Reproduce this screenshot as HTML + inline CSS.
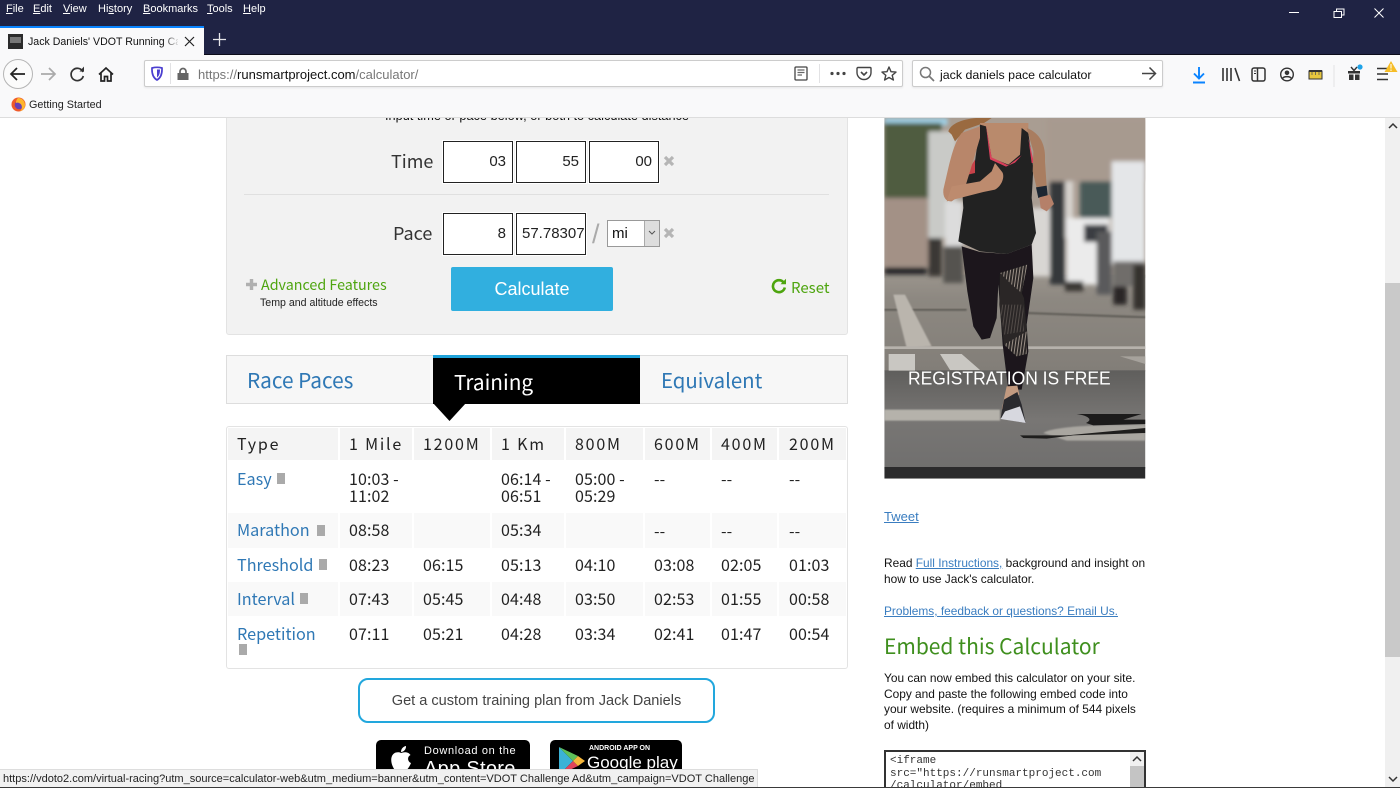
<!DOCTYPE html>
<html><head><meta charset="utf-8"><title>Jack Daniels' VDOT Running Calculator</title>
<style>
html,body{margin:0;padding:0;background:#fff;width:1400px;height:788px;overflow:hidden}
#r{position:relative;width:1400px;height:788px;overflow:hidden;font-family:"Liberation Sans",sans-serif}
#r div,#r svg{position:absolute}
.t{white-space:nowrap;line-height:20px;height:20px}
.o{font-family:"Noto Sans CJK JP","Liberation Sans",sans-serif}
.c{font-size:16px;letter-spacing:.1px;color:#222;font-family:"Noto Sans CJK JP","Liberation Sans",sans-serif}
.h{font-size:16px;color:#222;letter-spacing:1.8px;font-family:"Noto Sans CJK JP","Liberation Sans",sans-serif}
.l{font-size:16.2px;color:#2f78b5;font-family:"Noto Sans CJK JP","Liberation Sans",sans-serif}
.m{font-size:11px;color:#fff}
.b{background:#f4f4f4}
.z{background:#f9f9f9}
.i{background:#fff;border:1px solid #222;box-sizing:border-box;height:42px;font-size:15px;color:#222;text-align:right;line-height:40px;padding-right:6px;box-shadow:0 0 0 1px #fff;overflow:hidden}
.d{width:8px;height:11px;background:#aaa}
a{color:inherit}
.p{font-size:11.9px;color:#111;line-height:16px;white-space:nowrap}
</style></head><body><div id="r">

<!-- main left -->
<div style="left:226px;top:100px;width:622px;height:235px;background:#f2f2f2;border:1px solid #e3e3e3;box-sizing:border-box;border-radius:3px"></div>
<div class="t" style="left:226px;width:622px;text-align:center;top:106px;font-size:12.750px;color:#111">Input time or pace below, or both to calculate distance</div>

<div class="t o" style="left:391px;top:151px;font-size:18px;color:#333">Time</div>
<div class="i" style="left:443px;top:141px;width:70px">03</div>
<div class="i" style="left:516px;top:141px;width:70px">55</div>
<div class="i" style="left:589px;top:141px;width:70px">00</div>
<svg style="left:662px;top:154px" width="14" height="14" viewBox="0 0 14 14"><path d="M3 3L11 11M11 3L3 11" stroke="#b5b5b5" stroke-width="3.2"/></svg>
<div style="left:244px;top:194px;width:585px;height:1px;background:#e0e0e0"></div>
<div class="t o" style="left:393px;top:223px;font-size:18px;color:#333">Pace</div>
<div class="i" style="left:443px;top:213px;width:70px">8</div>
<div class="i" style="left:516px;top:213px;width:70px;text-align:left;padding:0 0 0 5px">57.78307</div>
<div class="t" style="left:592px;top:224px;font-size:27px;color:#aaa;font-weight:400">/</div>
<div style="left:607px;top:220px;width:53px;height:27px;background:#fff;border:1px solid #999;box-sizing:border-box"></div>
<div class="t" style="left:612px;top:224px;font-size:15px;color:#111">mi</div>
<div style="left:644px;top:221px;width:15px;height:25px;background:#ddd;border-left:1px solid #aaa;box-sizing:border-box"></div>
<svg style="left:646px;top:229px" width="12" height="8" viewBox="0 0 12 8"><path d="M3 2L6 5L9 2" stroke="#555" fill="none" stroke-width="1"/></svg>
<svg style="left:662px;top:226px" width="14" height="14" viewBox="0 0 14 14"><path d="M3 3L11 11M11 3L3 11" stroke="#b5b5b5" stroke-width="3.2"/></svg>

<svg style="left:245px;top:278px" width="13" height="13" viewBox="0 0 13 13"><path d="M1 6.500H12M6.500 1V12" stroke="#b0b0b0" stroke-width="3.4"/></svg>
<div class="t o" style="left:261px;top:275px;font-size:14.300px;color:#4ea50f">Advanced Features</div>
<div class="t" style="left:260px;top:293px;font-size:10.600px;color:#222">Temp and altitude effects</div>
<div style="left:451px;top:267px;width:162px;height:44px;background:#31afdf;border-radius:2px"></div>
<div class="t" style="left:451px;width:162px;text-align:center;top:279px;font-size:18px;color:#fff">Calculate</div>
<svg style="left:771px;top:278px" width="16" height="16" viewBox="0 0 16 16"><path d="M12.600 4.400A6 6 0 1 0 13.800 9.500" stroke="#4ea50f" stroke-width="2.6" fill="none"/><path d="M9.500 6.300H15V.8z" fill="#4ea50f"/></svg>
<div class="t o" style="left:791px;top:278px;font-size:15px;color:#4ea50f">Reset</div>

<!-- tabs -->
<div style="left:226px;top:355px;width:622px;height:49px;background:#f7f7f7;border:1px solid #ddd;box-sizing:border-box"></div>
<div style="left:433px;top:355px;width:207px;height:49px;background:#000"></div>
<div style="left:433px;top:355px;width:207px;height:3px;background:#1fa3da"></div>
<svg style="left:433px;top:403px" width="34" height="19" viewBox="0 0 34 19"><path d="M0 0H33L16.500 18z" fill="#000"/></svg>
<div class="t o" style="left:247px;top:369px;font-size:20.800px;color:#2f78b5">Race Paces</div>
<div class="t o" style="left:454px;top:371px;font-size:20.800px;color:#fff">Training</div>
<div class="t o" style="left:661px;top:369px;font-size:20.400px;color:#2f78b5">Equivalent</div>

<!-- table -->
<div style="left:226px;top:426px;width:622px;height:243px;border:1px solid #e3e3e3;border-radius:3px;box-sizing:border-box"></div>
<div class="b" style="left:228px;top:428px;width:110px;height:32px"></div>
<div class="b" style="left:340px;top:428px;width:72px;height:32px"></div>
<div class="b" style="left:414px;top:428px;width:76px;height:32px"></div>
<div class="b" style="left:492px;top:428px;width:72px;height:32px"></div>
<div class="b" style="left:566px;top:428px;width:77px;height:32px"></div>
<div class="b" style="left:645px;top:428px;width:65px;height:32px"></div>
<div class="b" style="left:712px;top:428px;width:65px;height:32px"></div>
<div class="b" style="left:779px;top:428px;width:67px;height:32px"></div>
<div class="z" style="left:228px;top:513px;width:110px;height:35px"></div>
<div class="z" style="left:340px;top:513px;width:72px;height:35px"></div>
<div class="z" style="left:414px;top:513px;width:76px;height:35px"></div>
<div class="z" style="left:492px;top:513px;width:72px;height:35px"></div>
<div class="z" style="left:566px;top:513px;width:77px;height:35px"></div>
<div class="z" style="left:645px;top:513px;width:65px;height:35px"></div>
<div class="z" style="left:712px;top:513px;width:65px;height:35px"></div>
<div class="z" style="left:779px;top:513px;width:67px;height:35px"></div>
<div class="z" style="left:228px;top:582px;width:110px;height:34px"></div>
<div class="z" style="left:340px;top:582px;width:72px;height:34px"></div>
<div class="z" style="left:414px;top:582px;width:76px;height:34px"></div>
<div class="z" style="left:492px;top:582px;width:72px;height:34px"></div>
<div class="z" style="left:566px;top:582px;width:77px;height:34px"></div>
<div class="z" style="left:645px;top:582px;width:65px;height:34px"></div>
<div class="z" style="left:712px;top:582px;width:65px;height:34px"></div>
<div class="z" style="left:779px;top:582px;width:67px;height:34px"></div>

<div class="t h" style="left:237px;top:433px">Type</div>
<div class="t h" style="left:349px;top:433px">1 Mile</div>
<div class="t h" style="left:423px;top:433px">1200M</div>
<div class="t h" style="left:501px;top:433px">1 Km</div>
<div class="t h" style="left:575px;top:433px">800M</div>
<div class="t h" style="left:654px;top:433px">600M</div>
<div class="t h" style="left:721px;top:433px">400M</div>
<div class="t h" style="left:789px;top:433px">200M</div>

<div class="t l" style="left:237px;top:468px">Easy</div><div class="d" style="left:277px;top:473px"></div>
<div class="t c" style="left:349px;top:468px">10:03 -</div><div class="t c" style="left:349px;top:485px">11:02</div>
<div class="t c" style="left:501px;top:468px">06:14 -</div><div class="t c" style="left:501px;top:485px">06:51</div>
<div class="t c" style="left:575px;top:468px">05:00 -</div><div class="t c" style="left:575px;top:485px">05:29</div>
<div class="t c" style="left:654px;top:468px">--</div><div class="t c" style="left:721px;top:468px">--</div><div class="t c" style="left:789px;top:468px">--</div>

<div class="t l" style="left:237px;top:519px">Marathon</div><div class="d" style="left:317px;top:525px"></div>
<div class="t c" style="left:349px;top:519px">08:58</div>
<div class="t c" style="left:501px;top:519px">05:34</div>
<div class="t c" style="left:654px;top:520px">--</div><div class="t c" style="left:721px;top:520px">--</div><div class="t c" style="left:789px;top:520px">--</div>

<div class="t l" style="left:237px;top:554px">Threshold</div><div class="d" style="left:319px;top:559px"></div>
<div class="t c" style="left:349px;top:554px">08:23</div><div class="t c" style="left:423px;top:554px">06:15</div><div class="t c" style="left:501px;top:554px">05:13</div><div class="t c" style="left:575px;top:554px">04:10</div><div class="t c" style="left:654px;top:554px">03:08</div><div class="t c" style="left:721px;top:554px">02:05</div><div class="t c" style="left:789px;top:554px">01:03</div>

<div class="t l" style="left:237px;top:588px">Interval</div><div class="d" style="left:300px;top:593px"></div>
<div class="t c" style="left:349px;top:588px">07:43</div><div class="t c" style="left:423px;top:588px">05:45</div><div class="t c" style="left:501px;top:588px">04:48</div><div class="t c" style="left:575px;top:588px">03:50</div><div class="t c" style="left:654px;top:588px">02:53</div><div class="t c" style="left:721px;top:588px">01:55</div><div class="t c" style="left:789px;top:588px">00:58</div>

<div class="t l" style="left:237px;top:623px">Repetition</div><div class="d" style="left:239px;top:644px"></div>
<div class="t c" style="left:349px;top:623px">07:11</div><div class="t c" style="left:423px;top:623px">05:21</div><div class="t c" style="left:501px;top:623px">04:28</div><div class="t c" style="left:575px;top:623px">03:34</div><div class="t c" style="left:654px;top:623px">02:41</div><div class="t c" style="left:721px;top:623px">01:47</div><div class="t c" style="left:789px;top:623px">00:54</div>

<!-- CTA -->
<div style="left:358px;top:678px;width:357px;height:45px;border:2px solid #22a7dd;border-radius:10px;box-sizing:border-box"></div>
<div class="t" style="left:358px;width:357px;text-align:center;top:691px;font-size:14.550px;color:#444">Get a custom training plan from Jack Daniels</div>

<!-- badges -->
<div style="left:376px;top:740px;width:154px;height:48px;background:#000;border-radius:5px"></div>
<svg style="left:388px;top:745px" width="26" height="30" viewBox="0 0 26 30"><path d="M13 8C11 7 8 7 6 8.500C2.500 11 2.500 17 5 22C7 26 9 27 11 26C12.500 25.300 13.500 25.300 15 26C17 27 19 25 21 22C22 20.500 22.500 19 23 18C20 17 18.500 12 22.500 10C20.500 7 16.500 6.700 13 8zM13 7C13 4 15 1.500 18 1C18.300 4 16 7 13 7z" fill="#fff"/></svg>
<div class="t" style="left:424px;top:741px;font-size:11px;color:#fff;letter-spacing:.65px">Download on the</div>
<div class="t" style="left:424px;top:759px;font-size:20px;color:#fff;letter-spacing:.3px">App Store</div>
<div style="left:550px;top:740px;width:132px;height:48px;background:#000;border-radius:5px"></div>
<svg style="left:558px;top:746px" width="28" height="30" viewBox="0 0 28 30"><path d="M1 1V29L15 15z" fill="#3bb2d6"/><path d="M1 1L15 15L20 10z" fill="#5fc05a"/><path d="M1 29L15 15L20 20z" fill="#e0435a"/><path d="M15 15L20 10L27 15L20 20z" fill="#f5b63a"/></svg>
<div class="t" style="left:589px;top:739px;font-size:7px;font-weight:700;color:#fff">ANDROID APP ON</div>
<div class="t" style="left:587px;top:753px;font-size:17px;color:#fff">Google play</div>

<!-- photo -->
<svg style="left:880px;top:118px" width="270" height="365" viewBox="0 0 810 1095">
<defs><filter id="bl"><feGaussianBlur stdDeviation="6"/></filter><filter id="bs"><feGaussianBlur stdDeviation="2"/></filter><filter id="bt"><feGaussianBlur stdDeviation="1"/></filter>
<linearGradient id="rd" x1="0" y1="0" x2="0" y2="1"><stop offset="0" stop-color="#9a948c"/><stop offset=".25" stop-color="#8d8881"/><stop offset="1" stop-color="#827e78"/></linearGradient>
<linearGradient id="rd2" x1="0" y1="0" x2="0" y2="1"><stop offset="0" stop-color="#5f5e5c"/><stop offset=".5" stop-color="#787674"/><stop offset="1" stop-color="#706f6e"/></linearGradient>
<pattern id="st" width="9" height="9" patternUnits="userSpaceOnUse" patternTransform="rotate(8)"><rect width="9" height="9" fill="#2a2726"/><rect width="3" height="9" fill="#9b9087"/></pattern>
</defs>
<clipPath id="pc"><rect x="13" y="0" width="783" height="1082"/></clipPath>
<g clip-path="url(#pc)">
<rect x="13" y="0" width="783" height="480" fill="#a99d92"/>
<rect x="13" y="470" width="783" height="290" fill="url(#rd)"/>
<rect x="13" y="757" width="783" height="295" fill="url(#rd2)"/>
<g filter="url(#bl)">
<rect x="13" y="0" width="190" height="22" fill="#9fd0e6"/>
<rect x="13" y="15" width="172" height="230" fill="#4f5c40"/>
<rect x="13" y="240" width="137" height="205" fill="#a39186"/>
<rect x="13" y="448" width="127" height="22" fill="#26282c"/>
<rect x="500" y="0" width="310" height="190" fill="#a79a8f"/>
<rect x="520" y="190" width="60" height="170" fill="#d6d2cd"/>
<rect x="600" y="190" width="100" height="110" fill="#4a5a58"/>
<rect x="145" y="40" width="85" height="320" fill="#c9cac7"/>
<rect x="145" y="360" width="40" height="115" fill="#3a3735"/>
<rect x="195" y="250" width="55" height="190" fill="#dcdcdc"/>
<rect x="190" y="385" width="60" height="110" fill="#55534f"/>
<rect x="450" y="270" width="60" height="205" fill="#d8d6d3"/>
<rect x="510" y="190" width="45" height="310" fill="#35393a"/>
<rect x="560" y="300" width="130" height="200" fill="#ebebeb"/>
<rect x="612" y="320" width="72" height="52" fill="#3a3e42"/>
<rect x="555" y="490" width="55" height="30" fill="#3a3836"/>
<rect x="650" y="340" width="45" height="190" fill="#5a5a5c"/>
<rect x="695" y="130" width="100" height="310" fill="#e4e6e8"/>
<rect x="700" y="430" width="95" height="75" fill="#6f6d6a"/>
<rect x="700" y="505" width="40" height="55" fill="#2a2826"/>
<rect x="760" y="440" width="36" height="135" fill="#34322f"/>
</g>
<path d="M13 575H260M440 585L796 598" stroke="#55524e" stroke-width="7" filter="url(#bs)" opacity=".7"/>
<path d="M40 530L75 530L155 685L80 690z" fill="#bab5ad" filter="url(#bs)"/>
<rect x="13" y="685" width="783" height="8" fill="#b6b2ac" filter="url(#bt)"/>
<path d="M26 708H105V758H26zM180 708H245L300 756H210z" fill="#c9c7c2" filter="url(#bt)"/>
<path d="M720 715H796V738z" fill="#a6a29c" filter="url(#bt)"/>
<path d="M13 875H360V908H13z" fill="#b5b2ab" filter="url(#bs)"/>
<path d="M490 945C520 925 650 920 796 920V968H560z" fill="#a9a6a0" filter="url(#bs)"/>
<path d="M590 888H785L730 905H796V918L640 922L618 915C640 905 625 893 590 888z" fill="#1c1b1b"/>
<path d="M420 952H560L796 930V945L580 952L500 962L430 960z" fill="#1f1e1d"/>
<rect x="13" y="1047" width="783" height="35" fill="#2b2b2c"/>
<!-- runner -->
<g filter="url(#bt)">
<path d="M205 40C215 5 290 -5 335 0L312 15L255 35L225 70L215 50z" fill="#9a6a40"/>
<path d="M300 15H445V140H300z" fill="#b98a6c"/>
<path d="M300 20L318 25L335 120L385 140L420 110L425 30L445 45L460 150L455 240L468 345L455 380L380 408L300 400L235 370L250 270L245 190L285 130z" fill="#202023"/>
<path d="M285 125L255 172L285 165z" fill="#c8424a"/>
<path d="M318 22L335 118L385 142L425 112L405 134L378 146L330 124z" fill="#d8405a"/>
<path d="M445 60L462 135L455 135z" fill="#d8405a"/>
<path d="M245 45C225 70 215 110 205 150L190 215C188 240 200 252 215 250L250 225L270 160L300 60V25z" fill="#b8866a"/>
<path d="M200 250L310 222L345 215C370 200 375 170 365 160L345 135L335 160L300 190L215 205z" fill="#bd8b6e"/>
<path d="M440 30C480 45 498 80 495 130L500 205L470 210L458 160L460 100z" fill="#a97d60"/>
<path d="M468 208L500 203L503 232L475 240z" fill="#1c2730"/>
<path d="M478 238L510 230L522 258L500 280L482 270z" fill="#b58069"/>
<path d="M245 385L300 402L380 408L455 380L460 480L440 620L445 700L425 815H385L368 680L355 500L350 600L330 660L305 665L280 625L262 520z" fill="#1a191b"/>
<path d="M360 465L442 440L425 525L432 540L440 640L440 705L410 715L372 680L358 560z" fill="#2a2726"/>
<path d="M360 465L442 440L425 525L395 500z" fill="url(#st)"/>
<path d="M372 680L440 640L440 708L410 715z" fill="url(#st)"/>
<path d="M360 560L430 560L432 640L372 650z" fill="url(#st)" opacity=".35"/>
<path d="M380 805L412 803L418 830L365 875z" fill="#c29a80"/>
<path d="M372 845L412 822L425 860L437 915L380 905L362 900z" fill="#2a2a2e"/>
<path d="M375 880L420 865L437 915L362 903z" fill="#d7d8df"/>
</g>
<text x="84" y="800" font-family="Liberation Sans,sans-serif" font-size="54" fill="#fff" textLength="608" lengthAdjust="spacingAndGlyphs">REGISTRATION IS FREE</text>
</g>
</svg>

<!-- right text -->
<div class="t" style="left:884px;top:507px;font-size:13px;color:#3a7dc0"><a style="text-decoration:underline">Tweet</a></div>
<div class="p" style="position:absolute;left:884px;top:555px">Read <a style="color:#3a7dc0;text-decoration:underline">Full Instructions,</a> background and insight on<br>how to use Jack's calculator.</div>
<div class="p" style="position:absolute;left:884px;top:603px;color:#3a7dc0;text-decoration:underline">Problems, feedback or questions? Email Us.</div>
<div class="t o" style="left:884px;top:636px;font-size:21px;color:#3f8f1e">Embed this Calculator</div>
<div class="p" style="position:absolute;left:884px;top:671px;line-height:15.700px">You can now embed this calculator on your site.<br>Copy and paste the following embed code into<br>your website. (requires a minimum of 544 pixels<br>of width)</div>
<div style="left:884px;top:750px;width:262px;height:44px;border:2px solid #333;box-sizing:border-box;background:#fff"></div>
<div style="left:890px;top:755px;font:11px/12.500px 'Liberation Mono',monospace;color:#333;white-space:nowrap">&lt;iframe<br>src="https://runsmartproject.com<br>/calculator/embed</div>
<div style="left:1130px;top:752px;width:14px;height:36px;background:#f0f0f0"></div>
<div style="left:1130px;top:766px;width:14px;height:22px;background:#c4c4c4"></div>
<svg style="left:1131px;top:755px" width="12" height="8" viewBox="0 0 12 8"><path d="M2 6L6 2L10 6" stroke="#333" stroke-width="1.500" fill="none"/></svg>

<!-- scrollbar -->
<div style="left:1385px;top:118px;width:15px;height:670px;background:#f0f0f0"></div>
<div style="left:1385px;top:283px;width:15px;height:374px;background:#c9c9c9"></div>
<svg style="left:1387px;top:122px" width="12" height="8" viewBox="0 0 12 8"><path d="M2 6L6 2L10 6" stroke="#333" stroke-width="1.500" fill="none"/></svg>
<svg style="left:1387px;top:775px" width="12" height="8" viewBox="0 0 12 8"><path d="M2 2L6 6L10 2" stroke="#333" stroke-width="1.500" fill="none"/></svg>

<!-- status -->
<div style="left:0;top:769px;width:758px;height:19px;background:#f1f1f1;border:1px solid #ddd;border-left:0;box-sizing:border-box"></div>
<div class="t" style="left:3px;top:769px;font-size:11.030px;color:#222">https://vdoto2.com/virtual-racing?utm_source=calculator-web&amp;utm_medium=banner&amp;utm_content=VDOT Challenge Ad&amp;utm_campaign=VDOT Challenge</div>
<div style="left:0;top:787px;width:1400px;height:1px;background:#3a3a3a"></div>

<!-- chrome -->
<div style="left:0;top:0;width:1400px;height:55px;background:#1f2344"></div>
<div style="left:0;top:54px;width:1400px;height:1px;background:#0c0c1a"></div>
<div style="left:0;top:55px;width:1400px;height:63px;background:#f9f9fa;border-bottom:1px solid #ddd;box-sizing:border-box"></div>
<div class="t m" style="left:6px;top:-1px"><u>F</u>ile</div>
<div class="t m" style="left:33px;top:-1px"><u>E</u>dit</div>
<div class="t m" style="left:63px;top:-1px"><u>V</u>iew</div>
<div class="t m" style="left:98px;top:-1px">Hi<u>s</u>tory</div>
<div class="t m" style="left:143px;top:-1px"><u>B</u>ookmarks</div>
<div class="t m" style="left:207px;top:-1px"><u>T</u>ools</div>
<div class="t m" style="left:243px;top:-1px"><u>H</u>elp</div>
<svg style="left:1289px;top:8px" width="100" height="10" viewBox="0 0 100 10"><path d="M0 4.500H10" stroke="#fff"/><path d="M45 3.500H52.500V9.500H45zM47.500 3V1H55V7H53" stroke="#fff" fill="none"/><path d="M85.500 .5L94.500 9.500M94.500 .5L85.500 9.500" stroke="#fff"/></svg>

<div style="left:0;top:26px;width:204px;height:30px;background:#f9f9fa"></div>
<div style="left:0;top:26px;width:204px;height:2px;background:#0a84ff"></div>
<div style="left:8px;top:34px;width:15px;height:15px;background:#2b2b2b"></div>
<div style="left:10px;top:37px;width:11px;height:6px;background:#777"></div>
<div class="t" style="left:28px;top:32px;width:150px;overflow:hidden;font-size:10.600px;color:#111">Jack Daniels' VDOT Running Cal</div>
<div style="left:163px;top:30px;width:17px;height:22px;background:linear-gradient(90deg,rgba(249,249,250,0),#f9f9fa)"></div>
<svg style="left:184px;top:36px" width="11" height="11" viewBox="0 0 11 11"><path d="M1 1L10 10M10 1L1 10" stroke="#222" stroke-width="1.200"/></svg>
<svg style="left:213px;top:33px" width="13" height="13" viewBox="0 0 13 13"><path d="M6.500 0V13M0 6.500H13" stroke="#e6e6ea" stroke-width="1.300"/></svg>

<svg style="left:0;top:55px" width="130" height="35" viewBox="0 0 130 35">
<circle cx="18" cy="19" r="14.500" fill="#fbfbfb" stroke="#b5b5b5"/>
<path d="M25 19H11.500M17 13L11 19L17 25" stroke="#222" stroke-width="1.700" fill="none"/>
<path d="M41 19H55M49 13L55 19L49 25" stroke="#aaa" stroke-width="1.700" fill="none"/>
<path d="M83 17A6.200 6.200 0 1 0 83.300 21" stroke="#333" stroke-width="1.700" fill="none"/><path d="M79.500 16.500H84V11.500z" fill="#333"/>
<path d="M99 19.500L106 13L113 19.500M101 18V26H104.500V21.500H107.500V26H111V18" stroke="#222" stroke-width="1.700" fill="none"/>
</svg>

<div style="left:144px;top:60px;width:759px;height:27px;background:#fff;border:1px solid #ccc;border-radius:2px;box-sizing:border-box;box-shadow:0 1px 2px rgba(0,0,0,.08)"></div>
<svg style="left:150px;top:66px" width="14" height="15" viewBox="0 0 14 15"><path d="M2 2C5 1.200 9 1.200 12 2C12.300 8 10.500 12 7 14C3.500 12 1.700 8 2 2z" fill="none" stroke="#4b3fd0" stroke-width="1.700"/><path d="M7 3.500H10C10 7.500 9 10 7 11.500z" fill="#4b3fd0"/></svg>
<div style="left:170px;top:63px;width:1px;height:21px;background:#e2e2e4"></div>
<svg style="left:176px;top:67px" width="14" height="14" viewBox="0 0 14 14"><path d="M1.500 6H12.500V13H1.500z" fill="#666"/><path d="M4 6.500V4.500A3 3 0 0 1 10 4.500V6.500" fill="none" stroke="#666" stroke-width="1.700"/></svg>
<div class="t" style="left:198px;top:65px;font-size:13px;color:#777">https://<span style="color:#111">runsmartproject.com</span>/calculator/</div>
<svg style="left:794px;top:66px" width="14" height="15" viewBox="0 0 14 15"><path d="M2 1H12C12.600 1 13 1.400 13 2V13C13 13.600 12.600 14 12 14H2C1.400 14 1 13.600 1 13V2C1 1.400 1.400 1 2 1z" fill="none" stroke="#444" stroke-width="1.300"/><path d="M3.500 4H10.500M3.500 6.500H10.500M3.500 9H8" stroke="#666" stroke-width="1.200"/></svg>
<div style="left:819px;top:64px;width:1px;height:19px;background:#e2e2e4"></div>
<svg style="left:830px;top:71px" width="16" height="5" viewBox="0 0 16 5"><circle cx="2" cy="2.500" r="1.600" fill="#444"/><circle cx="8" cy="2.500" r="1.600" fill="#444"/><circle cx="14" cy="2.500" r="1.600" fill="#444"/></svg>
<svg style="left:856px;top:66px" width="16" height="15" viewBox="0 0 16 15"><path d="M2 1.500H14C14.600 1.500 15 2 15 2.500V6.500A7 7 0 0 1 1 6.500V2.500C1 2 1.400 1.500 2 1.500z" fill="none" stroke="#444" stroke-width="1.400"/><path d="M5 6L8 9L11 6" stroke="#444" stroke-width="1.600" fill="none"/></svg>
<svg style="left:881px;top:66px" width="16" height="15" viewBox="0 0 16 15"><path d="M8 1L10 5.700L15 6.100L11.200 9.300L12.400 14L8 11.500L3.600 14L4.800 9.300L1 6.100L6 5.700z" fill="none" stroke="#444" stroke-width="1.400" stroke-linejoin="round"/></svg>

<div style="left:912px;top:60px;width:251px;height:27px;background:#fff;border:1px solid #ccc;border-radius:2px;box-sizing:border-box;box-shadow:0 1px 2px rgba(0,0,0,.08)"></div>
<svg style="left:919px;top:66px" width="16" height="16" viewBox="0 0 16 16"><circle cx="6.500" cy="6.500" r="5" fill="none" stroke="#777" stroke-width="1.500"/><path d="M10 10L15 15" stroke="#777" stroke-width="1.700"/></svg>
<div class="t" style="left:940px;top:65px;font-size:12.400px;color:#111">jack daniels pace calculator</div>
<svg style="left:1141px;top:66px" width="16" height="15" viewBox="0 0 16 15"><path d="M1 7.500H14.500M8.500 1.500L14.500 7.500L8.500 13.500" stroke="#444" stroke-width="1.500" fill="none"/></svg>

<svg style="left:1190px;top:63px;overflow:visible" width="210" height="24" viewBox="0 0 210 24">
<path d="M9 4V15M4 10.500L9 15.500L14 10.500M3 19.500H15" stroke="#0a84ff" stroke-width="1.900" fill="none"/>
<path d="M33 5V18M37 5V18M41 5V18M45 5L49.500 18" stroke="#333" stroke-width="1.600" fill="none"/>
<rect x="62" y="5" width="13" height="13" rx="2" fill="none" stroke="#333" stroke-width="1.500"/><path d="M67.500 5V18" stroke="#333" stroke-width="1.500"/><path d="M64 8H66M64 10.500H66" stroke="#333"/>
<circle cx="97" cy="11.500" r="6.300" fill="none" stroke="#333" stroke-width="1.400"/><circle cx="97" cy="9.800" r="2.300" fill="#333"/><path d="M92.500 15.500C94 13 100 13 101.500 15.500" stroke="#333" stroke-width="1.500" fill="none"/>
<rect x="119" y="8" width="13" height="8" fill="#e6c63e" stroke="#333" stroke-width="1"/><path d="M119 8H132" stroke="#333" stroke-width="2"/><path d="M122 9V12M125.500 9V12M129 9V12" stroke="#555" stroke-width=".8"/>
<path d="M144 2V24" stroke="#e2e2e4"/>
<path d="M158 8H170V10.500H158zM159 11.500H163.500V17H159zM165 11.500H169.500V17H165z" fill="#333"/><path d="M161 4L164 7.500L167 4" fill="none" stroke="#333" stroke-width="1.400"/><circle cx="170" cy="4" r="2.600" fill="#1fa3e8"/>
<path d="M187 5.500H198M187 11H198M187 16.500H198" stroke="#333" stroke-width="1.500"/>
<path d="M201 -2L207.500 9H194.500z" fill="#f6bd27"/><path d="M201 1V5.500M201 6.500V8" stroke="#fff" stroke-width="1"/>
</svg>

<svg style="left:11px;top:97px" width="15" height="15" viewBox="0 0 15 15"><circle cx="7.500" cy="7.500" r="7" fill="#ef5a2a"/><circle cx="8" cy="8" r="4.300" fill="#6a3fb3"/><path d="M7 1C11 1 14 4 14 8C14 11 12 13.500 9 14.200C11.500 12 11.500 8 9 6.500C7.500 5.500 6 5.500 5 6C5 4 5.500 2.200 7 1z" fill="#ffb52c"/></svg>
<div class="t" style="left:29px;top:95px;font-size:10.800px;color:#222">Getting Started</div>
</div></body></html>
